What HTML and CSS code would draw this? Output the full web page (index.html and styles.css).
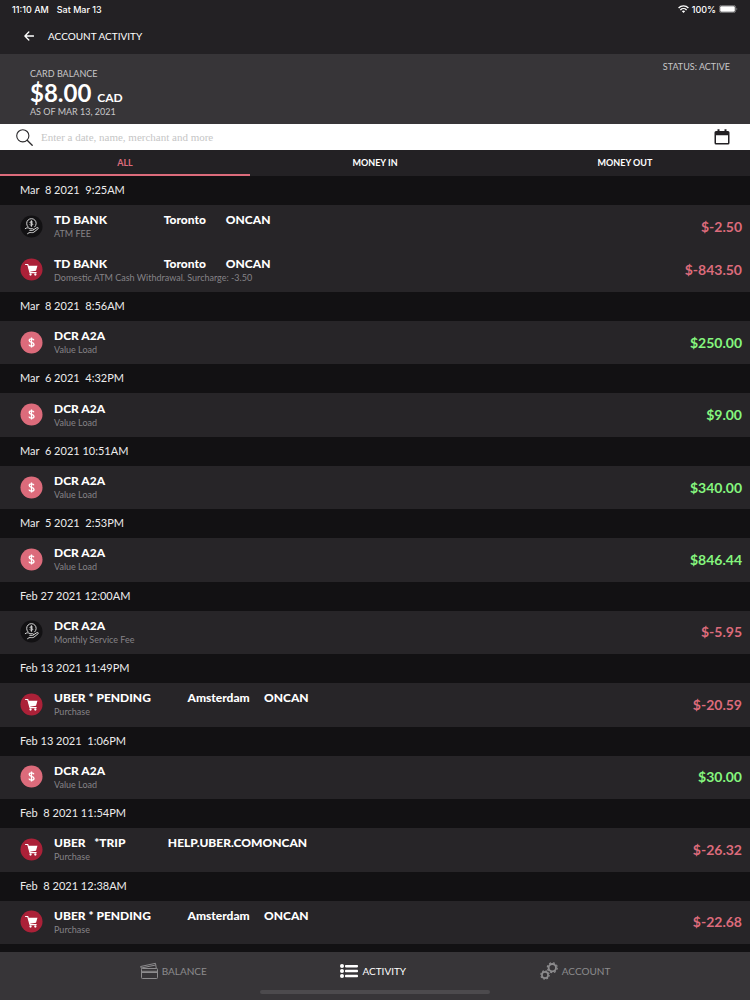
FILE: index.html
```html
<!DOCTYPE html>
<html lang="en">
<head>
    <meta charset="utf-8">
    <meta name="viewport" content="width=device-width, initial-scale=1">
    <title>Account Activity</title>
    <link rel="stylesheet" href="styles.css">
</head>
<body>

    <!-- shared icons -->
    <svg class="sprite" aria-hidden="true">
        <symbol id="icon-fee" viewBox="0 0 24 24">
            <circle cx="12" cy="12" r="11.5" fill="#121113"/>
            <g fill="none" stroke="#dedede" stroke-width="1" stroke-linecap="round" stroke-linejoin="round">
                <path d="M8.2 12.2a5 5 0 1 1 7.2.2"/>
                <path d="M13.3 7.4c-.4-.7-2.8-.8-2.8.4s2.800.5 2.800 1.900-2.500 1.400-2.900.5M11.900 5.900v6"/>
                <path d="M5.500 14.200c2-1.400 3.500-1 5 .1h2.700c1.300 0 1.200 1.700 0 1.700h-3M14 15.500l3.600-2.300c1.300-.6 2 .5 1.100 1.300l-4.300 3.500c-1.500.8-3.400 0-5 .5l-1.500 1"/>
            </g>
        </symbol>
        <symbol id="icon-cart" viewBox="0 0 24 24">
            <circle cx="12" cy="12" r="11.5" fill="#ab2138"/>
            <path d="M5.800 6.800h2.300l2.300 8.400h6.500" fill="none" stroke="#fff" stroke-width="1.200" stroke-linecap="round" stroke-linejoin="round"/>
            <path d="M8.500 8.200h9.700l-1.500 5.200-6.600.9z" fill="#fff"/>
            <circle cx="11" cy="17.200" r="1.200" fill="#fff"/>
            <circle cx="16" cy="17.200" r="1.200" fill="#fff"/>
        </symbol>
        <symbol id="icon-load" viewBox="0 0 24 24">
            <circle cx="12" cy="12" r="11.5" fill="#dc6b7b"/>
            <path d="M14.500 9.700c-.3-1-1.200-1.500-2.500-1.500-1.400 0-2.400.7-2.400 1.800 0 2.700 5 1.200 5 4 0 1.100-1 1.800-2.600 1.800-1.400 0-2.400-.6-2.700-1.600M12 6.800v10.400" fill="none" stroke="#fff" stroke-width="1.400"/>
        </symbol>
    </svg>

    <div class="status-bar">
        <span class="clock">11:10 AM</span>
        <span>Sat Mar 13</span>
        <div class="battery">
            <svg width="11" height="8" viewBox="0 0 11 8" aria-hidden="true">
                <g fill="none" stroke="#fff" stroke-width="1.400">
                    <path d="M.6 3C3.300.2 7.700.2 10.400 3"/>
                    <path d="M2.400 4.900c1.700-1.700 4.500-1.700 6.200 0"/>
                </g>
                <path d="M3.900 6.200c.9-.8 2.300-.8 3.200 0L5.500 7.900z" fill="#fff"/>
            </svg>
            <span>100%</span>
            <svg width="19" height="8" viewBox="0 0 19 8" aria-hidden="true">
                <rect x=".4" y=".4" width="16.200" height="7.200" rx="2" fill="none" stroke="#8a8a8c" stroke-width=".8"/>
                <rect x="1.200" y="1.200" width="14.600" height="5.600" rx="1.200" fill="#fff"/>
                <path d="M17.500 2.800c1 .3 1 2.100 0 2.400z" fill="#8a8a8c"/>
            </svg>
        </div>
    </div>

    <header class="title-bar">
        <a href="#" class="back" aria-label="Back">
            <svg width="10" height="10" viewBox="0 0 10 10" aria-hidden="true">
                <path d="M9.500 5H1M4.800 1L.9 5l3.900 4" fill="none" stroke="#fff" stroke-width="1.300" stroke-linecap="round" stroke-linejoin="round"/>
            </svg>
        </a>
        <h1>ACCOUNT ACTIVITY</h1>
    </header>

    <section class="balance">
        <div>
            <p>CARD BALANCE</p>
            <p class="total">$8.00 <span class="currency">CAD</span></p>
            <p class="as-of">AS OF MAR 13, 2021</p>
        </div>
        <p>STATUS: ACTIVE</p>
    </section>

    <div class="search">
        <label for="search" aria-label="Search activity">
            <svg width="17" height="17" viewBox="0 0 17 17" aria-hidden="true">
                <circle cx="6.800" cy="6.800" r="6.100" fill="none" stroke="#2b2a2c" stroke-width="1.100"/>
                <path d="M11.200 11.200l5 5" stroke="#2b2a2c" stroke-width="1.300" stroke-linecap="round"/>
            </svg>
        </label>
        <input type="text" id="search" placeholder="Enter a date, name, merchant and more">
        <button type="button" class="calendar" aria-label="Pick a date">
            <svg width="16" height="16" viewBox="0 0 16 16" aria-hidden="true">
                <path d="M2 2h1.500V.3h2V2h5V.3h2V2H14a1.500 1.500 0 0 1 1.500 1.500v10.500a1.500 1.500 0 0 1-1.500 1.500H2A1.500 1.500 0 0 1 .5 14V3.500A1.500 1.500 0 0 1 2 2zM2 6.300V14h12V6.300z" fill="#232124" fill-rule="evenodd"/>
            </svg>
        </button>
    </div>

    <div class="tabs">
        <button type="button" class="tab active">ALL</button>
        <button type="button" class="tab">MONEY IN</button>
        <button type="button" class="tab">MONEY OUT</button>
    </div>

    <main class="activity">
        <h2>Mar  8 2021  9:25AM</h2>
        <div class="entry">
            <svg class="icon"><use href="#icon-fee"/></svg>
            <div class="details">
                <h3>TD BANK                    Toronto       ONCAN</h3>
                <p>ATM FEE</p>
            </div>
            <span class="amount out">$-2.50</span>
        </div>
        <div class="entry">
            <svg class="icon"><use href="#icon-cart"/></svg>
            <div class="details">
                <h3>TD BANK                    Toronto       ONCAN</h3>
                <p>Domestic ATM Cash Withdrawal. Surcharge: -3.50</p>
            </div>
            <span class="amount out">$-843.50</span>
        </div>

        <h2>Mar  8 2021  8:56AM</h2>
        <div class="entry">
            <svg class="icon"><use href="#icon-load"/></svg>
            <div class="details">
                <h3>DCR A2A</h3>
                <p>Value Load</p>
            </div>
            <span class="amount in">$250.00</span>
        </div>

        <h2>Mar  6 2021  4:32PM</h2>
        <div class="entry">
            <svg class="icon"><use href="#icon-load"/></svg>
            <div class="details">
                <h3>DCR A2A</h3>
                <p>Value Load</p>
            </div>
            <span class="amount in">$9.00</span>
        </div>

        <h2>Mar  6 2021 10:51AM</h2>
        <div class="entry">
            <svg class="icon"><use href="#icon-load"/></svg>
            <div class="details">
                <h3>DCR A2A</h3>
                <p>Value Load</p>
            </div>
            <span class="amount in">$340.00</span>
        </div>

        <h2>Mar  5 2021  2:53PM</h2>
        <div class="entry">
            <svg class="icon"><use href="#icon-load"/></svg>
            <div class="details">
                <h3>DCR A2A</h3>
                <p>Value Load</p>
            </div>
            <span class="amount in">$846.44</span>
        </div>

        <h2>Feb 27 2021 12:00AM</h2>
        <div class="entry">
            <svg class="icon"><use href="#icon-fee"/></svg>
            <div class="details">
                <h3>DCR A2A</h3>
                <p>Monthly Service Fee</p>
            </div>
            <span class="amount out">$-5.95</span>
        </div>

        <h2>Feb 13 2021 11:49PM</h2>
        <div class="entry">
            <svg class="icon"><use href="#icon-cart"/></svg>
            <div class="details">
                <h3>UBER * PENDING             Amsterdam     ONCAN</h3>
                <p>Purchase</p>
            </div>
            <span class="amount out">$-20.59</span>
        </div>

        <h2>Feb 13 2021  1:06PM</h2>
        <div class="entry">
            <svg class="icon"><use href="#icon-load"/></svg>
            <div class="details">
                <h3>DCR A2A</h3>
                <p>Value Load</p>
            </div>
            <span class="amount in">$30.00</span>
        </div>

        <h2>Feb  8 2021 11:54PM</h2>
        <div class="entry">
            <svg class="icon"><use href="#icon-cart"/></svg>
            <div class="details">
                <h3>UBER   *TRIP               HELP.UBER.COMONCAN</h3>
                <p>Purchase</p>
            </div>
            <span class="amount out">$-26.32</span>
        </div>

        <h2>Feb  8 2021 12:38AM</h2>
        <div class="entry">
            <svg class="icon"><use href="#icon-cart"/></svg>
            <div class="details">
                <h3>UBER * PENDING             Amsterdam     ONCAN</h3>
                <p>Purchase</p>
            </div>
            <span class="amount out">$-22.68</span>
        </div>
    </main>

    <footer class="bottom">
        <nav>
            <a href="#">
                <svg width="18" height="18" viewBox="0 0 18 18" aria-hidden="true">
                    <g fill="none" stroke="currentColor" stroke-width="1">
                        <rect x="1.500" y="6.500" width="16" height="10" rx=".8"/>
                        <path d="M1.500 9.300h16M1.500 10.500h16M1.500 6.500L.6 4.500 15.500 1.300l.8 5.200M1.300 6l14.500-3"/>
                    </g>
                </svg>
                BALANCE
            </a>
            <a href="#" class="current">
                <svg width="18" height="14" viewBox="0 0 18 14" aria-hidden="true">
                    <g fill="currentColor">
                        <circle cx="2" cy="2" r="2"/>
                        <circle cx="2" cy="7" r="2"/>
                        <circle cx="2" cy="12" r="2"/>
                        <rect x="5" y="1" width="13" height="2.400" rx=".8"/>
                        <rect x="5" y="5.800" width="13" height="2.400" rx=".8"/>
                        <rect x="5" y="10.800" width="13" height="2.400" rx=".8"/>
                    </g>
                </svg>
                ACTIVITY
            </a>
            <a href="#">
                <svg width="18" height="18" viewBox="0 0 18 18" aria-hidden="true">
                    <g fill="none" stroke="currentColor">
                        <circle cx="12.300" cy="5.700" r="3.700" stroke-width="1.900"/>
                        <circle cx="12.300" cy="5.700" r="5" stroke-width="1.200" stroke-dasharray="2 1.930"/>
                        <circle cx="5" cy="13" r="3.100" stroke-width="1.700"/>
                        <circle cx="5" cy="13" r="4.200" stroke-width="1.200" stroke-dasharray="1.650 1.650"/>
                    </g>
                </svg>
                ACCOUNT
            </a>
        </nav>
        <div class="home-bar"></div>
    </footer>

</body>
</html>
```

FILE: styles.css
```css
* {
    box-sizing: border-box;
    margin: 0;
    padding: 0;
}

body {
    display: flex;
    flex-direction: column;
    min-height: 100vh;
    background-color: #121113;
    color: #fff;
    font-family: Lato, "Open Sans", sans-serif;
    font-size: 10px;
}

svg {
    display: block;
    flex-shrink: 0;
}

a {
    color: inherit;
    text-decoration: none;
}

button {
    border: none;
    background: none;
    color: inherit;
    font: inherit;
    cursor: pointer;
}

.sprite {
    position: absolute;
    width: 0;
    height: 0;
}

.status-bar {
    display: flex;
    align-items: center;
    gap: 8px;
    height: 18px;
    padding: 0 12px;
    background-color: #232124;
    font-family: Inter, sans-serif;
    font-size: 9px;
    font-weight: 500;
}

.battery {
    display: flex;
    align-items: center;
    gap: 3px;
    margin-left: auto;
}

.title-bar {
    display: flex;
    align-items: center;
    gap: 14px;
    height: 36px;
    padding: 0 24px;
    background-color: #232124;
}

.title-bar h1 {
    font-size: 10px;
    font-weight: 400;
}

.balance {
    display: flex;
    justify-content: space-between;
    height: 70px;
    padding: 7px 20px 0 30px;
    background-color: #373538;
    color: #c8c7c9;
    font-size: 9px;
    line-height: 12px;
}

.balance div {
    padding-top: 7px;
}

.total {
    color: #fff;
    font-size: 24px;
    font-weight: 700;
    line-height: 26px;
}

.currency {
    font-size: 12px;
    line-height: 1;
}

.search {
    display: flex;
    align-items: center;
    gap: 8px;
    height: 26px;
    padding: 0 20px 0 16px;
    background-color: #fff;
}

.search input {
    flex: 1;
    min-width: 0;
    border: none;
    outline: none;
    font-family: "Liberation Serif", serif;
    font-size: 11px;
}

.search input::placeholder {
    color: #c6c6c6;
}

.tabs {
    display: grid;
    grid-template-columns: repeat(3, 1fr);
    height: 26px;
    background-color: #232124;
}

.tab {
    border-bottom: 2px solid transparent;
    font-size: 9px;
    font-weight: 700;
}

.tab.active {
    border-color: #dc6b7b;
    color: #dc6b7b;
}

/* rows share out whatever height is left above the footer */
.activity {
    display: flex;
    flex: 1;
    flex-direction: column;
    padding-bottom: 8px;
}

.activity h2 {
    padding: 0 0 1px 20px;
    color: #ececec;
    font-size: 11px;
    font-weight: 400;
    line-height: 28px;
    white-space: pre;
}

.entry {
    display: flex;
    flex: 1 0 43px;
    align-items: center;
    gap: 11px;
    padding: 0 8px 1px 20px;
    background-color: #272528;
}

.icon {
    width: 23px;
    height: 23px;
}

.details {
    flex: 1;
    min-width: 0;
}

.details h3 {
    font-size: 12px;
    font-weight: 900;
    line-height: 16px;
    white-space: pre;
}

.details p {
    color: #858387;
    font-size: 9px;
    line-height: 12px;
}

.amount {
    font-size: 14px;
    font-weight: 700;
}

.in {
    color: #85f67e;
}

.out {
    color: #dc6b7b;
}

.bottom {
    height: 48px;
    background-color: #373538;
}

.bottom nav {
    display: flex;
    justify-content: space-evenly;
    height: 38px;
    padding: 0 6px;
}

.bottom a {
    display: flex;
    align-items: center;
    gap: 4px;
    color: #8c8b8d;
    font-size: 10px;
}

.bottom a.current {
    color: #fff;
}

.home-bar {
    width: 230px;
    height: 4px;
    margin: 0 auto;
    border-radius: 2px;
    background-color: #4c4a4d;
}
```
